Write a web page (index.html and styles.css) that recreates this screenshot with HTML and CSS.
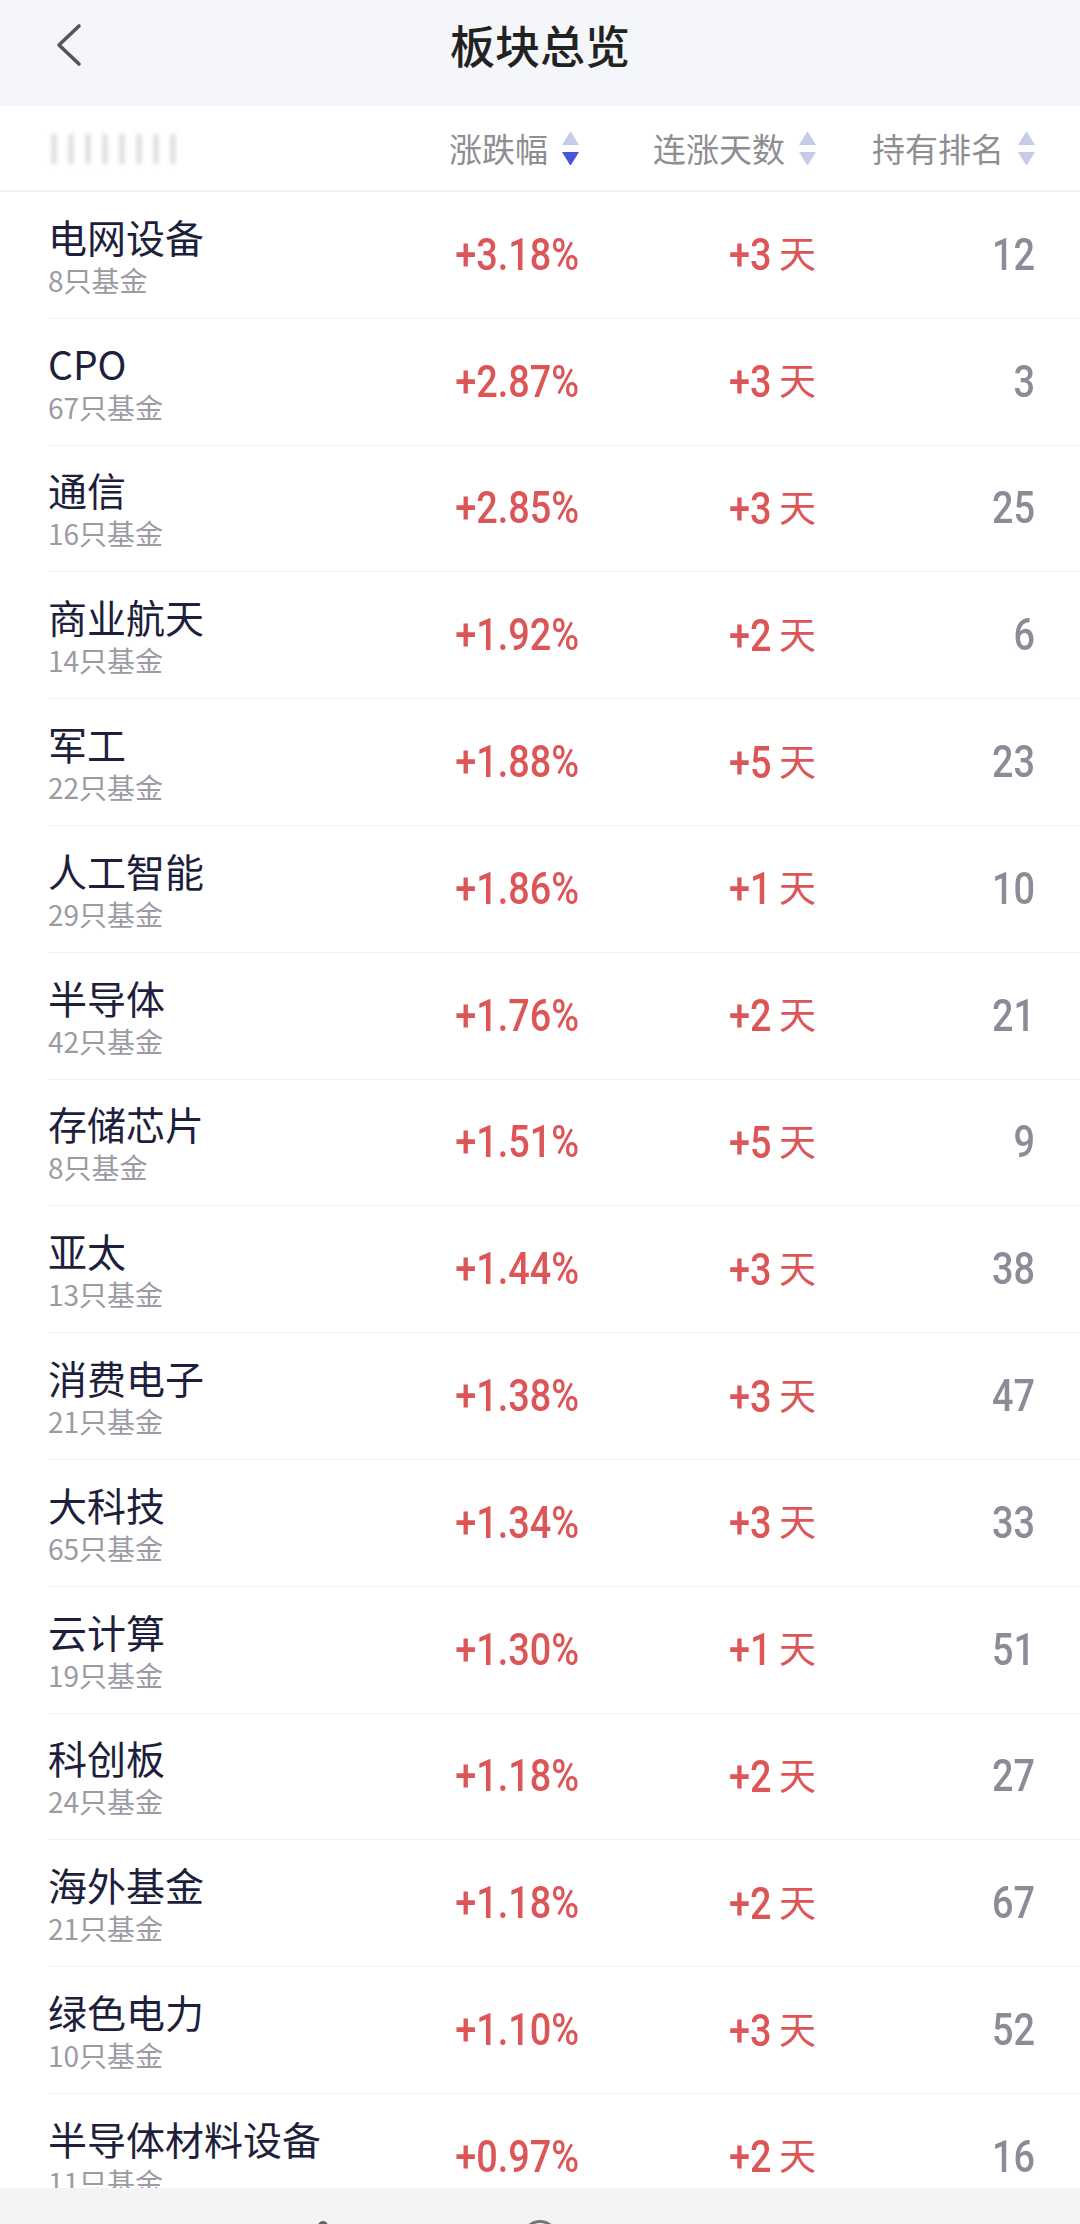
FILE: index.html
```html
<!DOCTYPE html>
<html lang="zh-CN">
  <head>
    <meta charset="UTF-8" />
    <meta name="viewport" content="width=device-width, initial-scale=1" />
    <title>板块总览</title>
    <link rel="stylesheet" href="styles.css">
  </head>
  <body>
    <header class="topbar">
      <a class="back" href="#">
        <svg width="30" height="44" viewBox="0 0 30 44">
          <polyline points="24,3 4,22 24,41" fill="none" stroke="#555" stroke-width="3.6" stroke-linecap="round" stroke-linejoin="round" />
        </svg>
      </a>
      <h1>板块总览</h1>
      <span></span>
    </header>

    <div class="colhead">
      <div class="blurred"></div>
      <div class="sort">涨跌幅 <i class="arrows down"></i></div>
      <div class="sort">连涨天数 <i class="arrows"></i></div>
      <div class="sort">持有排名 <i class="arrows"></i></div>
    </div>

    <ul class="list">
      <li class="row">
        <div class="name">电网设备<small>8只基金</small></div>
        <div class="num up"><span>+3.18%</span></div>
        <div class="num up"><span>+3</span><em>天</em></div>
        <div class="num rank"><span>12</span></div>
      </li>
      <li class="row">
        <div class="name">CPO<small>67只基金</small></div>
        <div class="num up"><span>+2.87%</span></div>
        <div class="num up"><span>+3</span><em>天</em></div>
        <div class="num rank"><span>3</span></div>
      </li>
      <li class="row">
        <div class="name">通信<small>16只基金</small></div>
        <div class="num up"><span>+2.85%</span></div>
        <div class="num up"><span>+3</span><em>天</em></div>
        <div class="num rank"><span>25</span></div>
      </li>
      <li class="row">
        <div class="name">商业航天<small>14只基金</small></div>
        <div class="num up"><span>+1.92%</span></div>
        <div class="num up"><span>+2</span><em>天</em></div>
        <div class="num rank"><span>6</span></div>
      </li>
      <li class="row">
        <div class="name">军工<small>22只基金</small></div>
        <div class="num up"><span>+1.88%</span></div>
        <div class="num up"><span>+5</span><em>天</em></div>
        <div class="num rank"><span>23</span></div>
      </li>
      <li class="row">
        <div class="name">人工智能<small>29只基金</small></div>
        <div class="num up"><span>+1.86%</span></div>
        <div class="num up"><span>+1</span><em>天</em></div>
        <div class="num rank"><span>10</span></div>
      </li>
      <li class="row">
        <div class="name">半导体<small>42只基金</small></div>
        <div class="num up"><span>+1.76%</span></div>
        <div class="num up"><span>+2</span><em>天</em></div>
        <div class="num rank"><span>21</span></div>
      </li>
      <li class="row">
        <div class="name">存储芯片<small>8只基金</small></div>
        <div class="num up"><span>+1.51%</span></div>
        <div class="num up"><span>+5</span><em>天</em></div>
        <div class="num rank"><span>9</span></div>
      </li>
      <li class="row">
        <div class="name">亚太<small>13只基金</small></div>
        <div class="num up"><span>+1.44%</span></div>
        <div class="num up"><span>+3</span><em>天</em></div>
        <div class="num rank"><span>38</span></div>
      </li>
      <li class="row">
        <div class="name">消费电子<small>21只基金</small></div>
        <div class="num up"><span>+1.38%</span></div>
        <div class="num up"><span>+3</span><em>天</em></div>
        <div class="num rank"><span>47</span></div>
      </li>
      <li class="row">
        <div class="name">大科技<small>65只基金</small></div>
        <div class="num up"><span>+1.34%</span></div>
        <div class="num up"><span>+3</span><em>天</em></div>
        <div class="num rank"><span>33</span></div>
      </li>
      <li class="row">
        <div class="name">云计算<small>19只基金</small></div>
        <div class="num up"><span>+1.30%</span></div>
        <div class="num up"><span>+1</span><em>天</em></div>
        <div class="num rank"><span>51</span></div>
      </li>
      <li class="row">
        <div class="name">科创板<small>24只基金</small></div>
        <div class="num up"><span>+1.18%</span></div>
        <div class="num up"><span>+2</span><em>天</em></div>
        <div class="num rank"><span>27</span></div>
      </li>
      <li class="row">
        <div class="name">海外基金<small>21只基金</small></div>
        <div class="num up"><span>+1.18%</span></div>
        <div class="num up"><span>+2</span><em>天</em></div>
        <div class="num rank"><span>67</span></div>
      </li>
      <li class="row">
        <div class="name">绿色电力<small>10只基金</small></div>
        <div class="num up"><span>+1.10%</span></div>
        <div class="num up"><span>+3</span><em>天</em></div>
        <div class="num rank"><span>52</span></div>
      </li>
      <li class="row">
        <div class="name">半导体材料设备<small>11只基金</small></div>
        <div class="num up"><span>+0.97%</span></div>
        <div class="num up"><span>+2</span><em>天</em></div>
        <div class="num rank"><span>16</span></div>
      </li>
    </ul>

    <nav class="tabbar">
      <i class="dot"></i>
      <i class="ring"></i>
    </nav>
  </body>
</html>
```

FILE: styles.css
```css
body {
  margin: 0;
  height: 2224px;
  overflow: hidden;
  background: #fff;
  font-family: "Noto Sans CJK SC", sans-serif;
}
.topbar {
  height: 106px;
  box-sizing: border-box;
  padding-bottom: 16px;
  background: #f5f6fa;
  display: grid;
  grid-template-columns: 1fr auto 1fr;
  align-items: center;
}
.back {
  display: flex;
  padding-left: 55px;
}
.topbar h1 {
  margin: 0;
  font-size: 45px;
  font-weight: 500;
  line-height: 60px;
  color: #222;
}
.colhead {
  height: 86px;
  box-sizing: border-box;
  padding: 0 45px 0 52px;
  border-bottom: 2px solid #efeff2;
  display: grid;
  grid-template-columns: 1fr 200px 237px 219px;
  align-items: center;
}
.blurred {
  width: 130px;
  height: 30px;
  margin-top: 2px;
  background: repeating-linear-gradient(to right, #b8b8bc 0 4px, transparent 4px 17px);
  filter: blur(2px);
  opacity: 0.6;
}
.sort {
  display: flex;
  justify-content: flex-end;
  align-items: center;
  gap: 14px;
  font-size: 33px;
  line-height: 40px;
  color: #8e8e93;
}
.arrows {
  width: 17px;
  height: 33px;
  display: flex;
  flex-direction: column;
  justify-content: space-between;
}
.arrows::before,
.arrows::after {
  content: "";
  border-left: 8.5px solid transparent;
  border-right: 8.5px solid transparent;
}
.arrows::before {
  border-bottom: 13px solid #c8cbe8;
}
.arrows::after {
  border-top: 13px solid #c8cbe8;
}
.arrows.down::after {
  border-top-color: #4457d8;
}
.list {
  list-style: none;
  margin: 0;
  padding: 0 0 0 48px;
}
.row {
  height: 126.8px;
  box-sizing: border-box;
  padding-right: 45px;
  border-bottom: 1px solid #f1f1f3;
  display: grid;
  grid-template-columns: 1fr 200px 237px 219px;
  align-items: center;
}
.name {
  font-size: 39px;
  line-height: 46px;
  color: #1d1f3c;
  white-space: nowrap;
}
.name small {
  display: block;
  margin-top: 4px;
  font-size: 28px;
  line-height: 34px;
  color: #9a9ba3;
}
.num {
  display: flex;
  justify-content: flex-end;
  align-items: baseline;
  font-family: Roboto, "Noto Sans CJK SC", sans-serif;
  font-weight: 500;
  font-size: 44px;
  line-height: 44px;
}
.num span {
  display: inline-block;
  transform: scaleX(0.86);
  transform-origin: right center;
}
.num em {
  font-style: normal;
  font-family: "Noto Sans CJK SC", sans-serif;
  font-weight: 400;
  font-size: 37px;
  line-height: 44px;
  margin-left: 8px;
  position: relative;
  top: -2px;
}
.up {
  color: #dc5658;
}
.rank {
  color: #8a8c98;
}
.tabbar {
  position: fixed;
  left: 0;
  right: 0;
  bottom: 0;
  height: 36px;
  background: #f4f4f4;
  overflow: hidden;
}
.dot {
  position: absolute;
  left: 318px;
  top: 33px;
  width: 10px;
  height: 10px;
  border-radius: 50%;
  background: #666;
}
.ring {
  position: absolute;
  left: 522px;
  top: 32px;
  width: 36px;
  height: 36px;
  box-sizing: border-box;
  border: 3px solid #777;
  border-radius: 50%;
}
```
